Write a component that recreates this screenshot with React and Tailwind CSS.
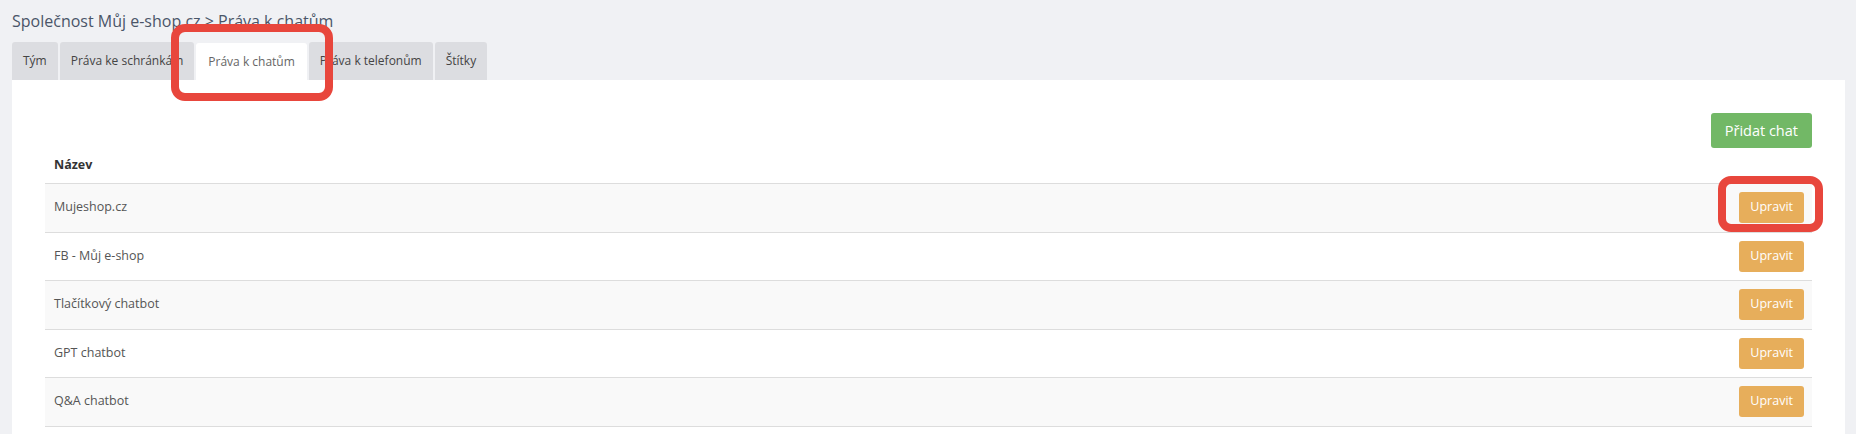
import React from 'react';

const tabs = ['Tým', 'Práva ke schránkám', 'Práva k chatům', 'Práva k telefonům', 'Štítky'];
const chats = ['Mujeshop.cz', 'FB - Můj e-shop', 'Tlačítkový chatbot', 'GPT chatbot', 'Q&A chatbot'];

export default function App() {
  const active = 'Práva k chatům';

  return (
    <div className="relative h-[434px] w-full overflow-hidden bg-[#f0f1f4] pl-[12px] pr-[11px] font-['Open_Sans',sans-serif]">
      {/* breadcrumb */}
      <div className="pt-[10px] pb-[10px] text-[16px] leading-[22px] text-[#4a5568]">
        Společnost Můj e-shop.cz &gt; Práva k chatům
      </div>

      {/* tabs */}
      <div className="flex h-[38px] items-end gap-[2px]">
        {tabs.map((tab) =>
          tab === active ? (
            <div
              key={tab}
              className="flex h-[37px] items-center rounded-t-[3px] bg-white px-[12px] text-[12px] text-[#666]"
            >
              {tab}
            </div>
          ) : (
            <div
              key={tab}
              className="flex h-[38px] items-center rounded-t-[3px] bg-[#dcdde1] px-[11px] text-[12px] text-[#444]"
            >
              {tab}
            </div>
          )
        )}
      </div>

      {/* panel */}
      <div className="h-[354px] bg-white px-[33px]">
        <div className="flex justify-end pt-[33px]">
          <button className="h-[35px] rounded-[3px] bg-[#72b866] px-[14px] text-[14.5px] text-white">
            Přidat chat
          </button>
        </div>

        <div className="flex h-[36px] items-center border-b border-[#dddddd] px-[9px] text-[12.5px] font-bold text-[#333]">
          Název
        </div>

        {chats.map((name, i) => (
          <div
            key={name}
            className={`flex h-[48.5px] items-center justify-between border-b border-[#dddddd] pl-[9px] pr-[8px] text-[12.5px] text-[#555] ${
              i % 2 === 0 ? 'bg-[#f9f9f9]' : 'bg-white'
            }`}
          >
            <span>{name}</span>
            <button className="h-[31px] rounded-[3px] bg-[#e7ae5b] px-[11px] text-[12.5px] text-white">
              Upravit
            </button>
          </div>
        ))}
      </div>

      {/* annotation marks */}
      <div className="pointer-events-none absolute left-[171px] top-[24px] h-[77px] w-[162px] rounded-[14px] border-[8px] border-[#e8463c]" />
      <div className="pointer-events-none absolute left-[1718px] top-[176px] h-[56px] w-[105px] rounded-[13px] border-[8px] border-[#e8463c]" />
    </div>
  );
}
